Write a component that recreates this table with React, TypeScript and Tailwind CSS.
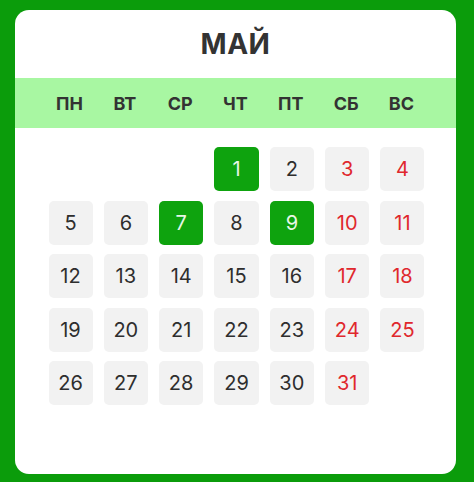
import React from "react";

const headers = ["ПН", "ВТ", "СР", "ЧТ", "ПТ", "СБ", "ВС"];

export default function App() {
  const cells: (number | null)[] = [null, null, null];
  for (let d = 1; d <= 31; d++) cells.push(d);
  const green = new Set([1, 7, 9]);
  return (
    <div
      className="w-[474px] h-[482px] bg-[#0b9c0b] pt-[10px] pl-[15px]"
      style={{ fontFamily: "Inter, 'Noto Sans', sans-serif" }}
    >
      <div className="w-[441px] h-[464px] bg-white rounded-[14px] flex flex-col">
        <div className="h-[68px] flex items-center justify-center text-[28px] font-bold text-[#333] tracking-[0.5px]">
          МАЙ
        </div>
        <div className="h-[50px] bg-[#a8f7a2] flex justify-center">
          <div className="w-[376px] grid grid-cols-7 gap-x-[11.33px] items-center">
            {headers.map((h) => (
              <div key={h} className="text-center text-[18px] font-bold text-[#333]">
                {h}
              </div>
            ))}
          </div>
        </div>
        <div className="flex justify-center pt-[19px] pl-[2px]">
          <div className="w-[376px] grid grid-cols-7 gap-x-[11.33px] gap-y-[9.5px]">
            {cells.map((d, i) => {
              if (d === null) return <div key={i} className="h-[44px]" />;
              const col = i % 7;
              const isGreen = green.has(d);
              const isRed = col >= 5;
              return (
                <div
                  key={i}
                  className={
                    isGreen
                      ? "h-[44px] rounded-[5px] bg-[#0ea30e] text-[#e6f7e6] flex items-center justify-center text-[20px]"
                      : isRed
                      ? "h-[44px] rounded-[5px] bg-[#f2f2f2] text-[#e0282d] flex items-center justify-center text-[20px]"
                      : "h-[44px] rounded-[5px] bg-[#f2f2f2] text-[#2e2e2e] flex items-center justify-center text-[20px]"
                  }
                >
                  {d}
                </div>
              );
            })}
          </div>
        </div>
      </div>
    </div>
  );
}
